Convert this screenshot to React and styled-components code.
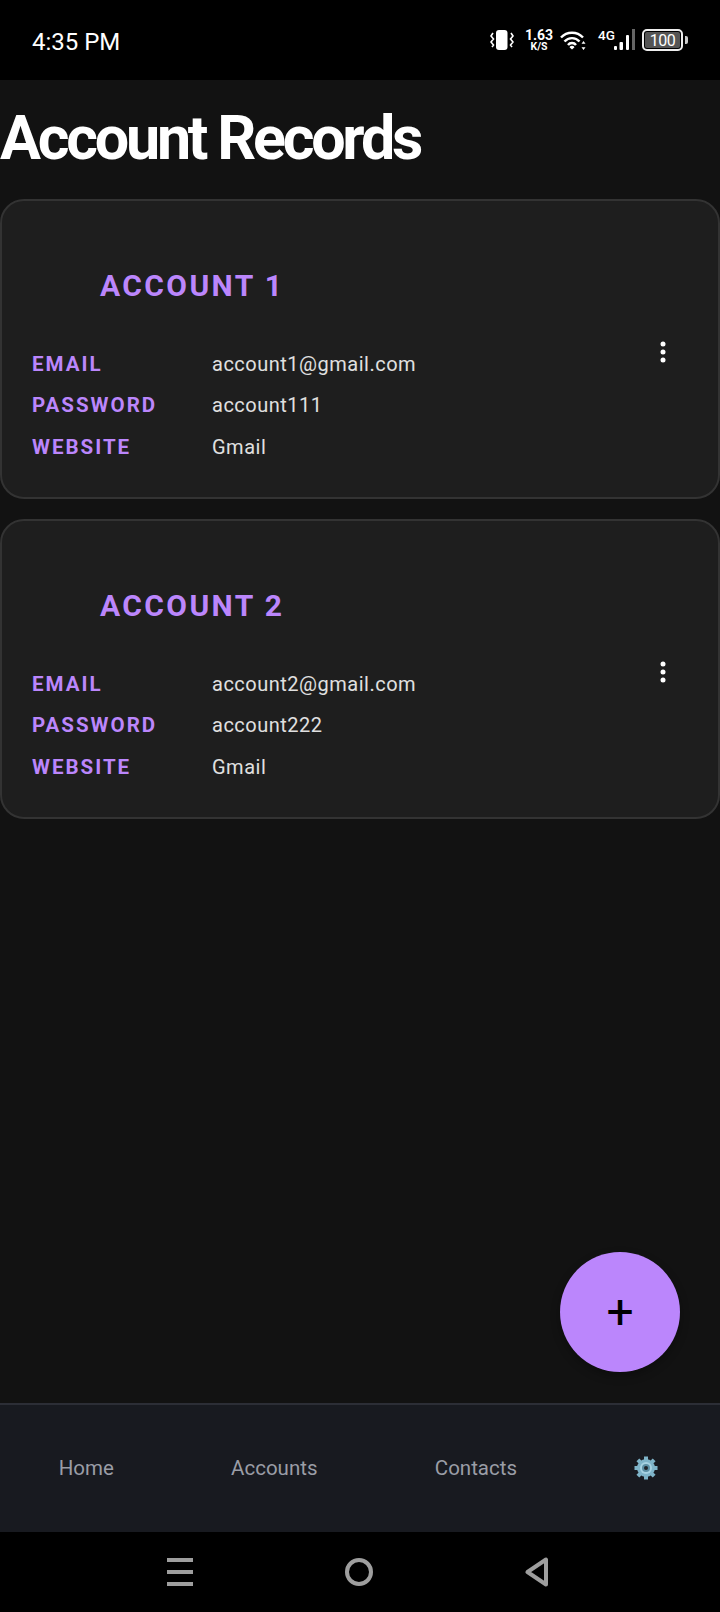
import React from "react";
import styled, { createGlobalStyle } from "styled-components";

const GlobalStyle = createGlobalStyle`
  html, body {
    margin: 0;
    padding: 0;
    background: #121212;
    font-family: Roboto, "Liberation Sans", sans-serif;
  }
`;

const Screen = styled.div`
  display: flex;
  flex-direction: column;
  width: 720px;
  height: 1612px;
  overflow: hidden;
  background: #121212;
`;

const StatusBar = styled.div`
  display: flex;
  flex: none;
  align-items: center;
  justify-content: space-between;
  height: 80px;
  padding: 0 32px;
  box-sizing: border-box;
  background: #000;
  color: #fff;
`;

const Clock = styled.span`
  margin-top: 3px;
  font-size: 24px;
`;

const StatusIcons = styled.div`
  display: flex;
  align-items: center;
`;

const Speed = styled.div`
  display: flex;
  flex-direction: column;
  align-items: center;
  width: 28px;
  margin: 0 7px 0 11px;
  font-weight: 700;
`;

const SpeedValue = styled.span`
  font-size: 14px;
  line-height: 13px;
`;

const SpeedUnit = styled.span`
  font-size: 10.5px;
  line-height: 10px;
`;

const Network = styled.span`
  width: 16px;
  margin: 0 0 10px 12px;
  font-size: 13.5px;
  font-weight: 500;
  line-height: 14px;
`;

const Battery = styled.div`
  position: relative;
  display: flex;
  align-items: center;
  justify-content: center;
  width: 41px;
  height: 22px;
  margin: 0 5px 0 7px;
  padding: 1px;
  border: 2px solid #eee;
  border-radius: 5px;
  box-sizing: border-box;
  background: #555;
  background-clip: content-box;
  font-size: 16px;
  letter-spacing: -0.5px;

  &::after {
    content: "";
    position: absolute;
    right: -7px;
    width: 3px;
    height: 8px;
    border-radius: 0 2px 2px 0;
    background: #ccc;
  }
`;

const Main = styled.main`
  position: relative;
  flex: 1;
`;

const Title = styled.h1`
  margin: 22px 0 25px;
  color: #fff;
  font-size: 61px;
  font-weight: 700;
  line-height: 72px;
  letter-spacing: -3.25px;
`;

const Card = styled.section`
  height: 300px;
  margin-bottom: 20px;
  border: 2px solid #333;
  border-radius: 24px;
  box-sizing: border-box;
  background: #1e1e1e;
`;

const CardName = styled.h2`
  margin: 0;
  padding: 67px 0 0 98px;
  color: #bb86fc;
  font-size: 30px;
  font-weight: 700;
  line-height: 36px;
  letter-spacing: 2.4px;
`;

const CardBody = styled.div`
  display: flex;
  justify-content: space-between;
  margin-top: 39px;
  padding: 0 43px 0 30px;
`;

const Row = styled.div`
  display: flex;
  align-items: center;
  height: 41.5px;
`;

const Label = styled.span`
  width: 180px;
  color: #bb86fc;
  font-size: 20.5px;
  font-weight: 700;
  letter-spacing: 2px;
`;

const Value = styled.span`
  color: #e0e0e0;
  font-size: 20px;
  letter-spacing: 0.5px;
`;

const MoreButton = styled.svg`
  flex: none;
  width: 24px;
  height: 24px;
  margin-top: -3px;
  fill: #fff;
`;

const Fab = styled.button`
  position: absolute;
  right: 40px;
  bottom: 31px;
  display: flex;
  align-items: center;
  justify-content: center;
  width: 120px;
  height: 120px;
  padding: 0;
  border: none;
  border-radius: 50%;
  background: #bb86fc;
  box-shadow: 0 4px 10px rgba(0, 0, 0, 0.3);
  color: #000;
  font-family: Roboto, sans-serif;
  font-size: 48px;
  line-height: 1;
`;

const TabBar = styled.nav`
  display: flex;
  flex: none;
  align-items: center;
  justify-content: space-around;
  height: 129px;
  padding: 0 3px 2px 0;
  border-top: 2px solid #2c2e36;
  box-sizing: border-box;
  background: #181a20;
`;

const Tab = styled.span`
  color: #9a9da6;
  font-size: 20.5px;
`;

const NavBar = styled.div`
  display: flex;
  flex: none;
  align-items: center;
  justify-content: center;
  gap: 152px;
  height: 80px;
  padding-right: 4px;
  background: #000;
`;

const VibrateIcon = () => (
  <svg width="24" height="20" viewBox="0 0 24 20">
    <rect x="6" y="0" width="11.500" height="20" rx="3" fill="#fff" />
    <path d="M3 3 1 6l2.500 3L1 12l2.500 3L2 17M21 3l2 3-2.500 3 2.500 3-2.500 3 1.500 2" fill="none" stroke="#fff" strokeWidth="1.600" />
  </svg>
);

const WifiIcon = () => (
  <svg width="26" height="20" viewBox="0 0 26 20">
    <path d="M1 7.500A15 15 0 0 1 23 7.500M4.500 11.500A10 10 0 0 1 19.500 11.500M8 15A5 5 0 0 1 16 15" fill="none" stroke="#fff" strokeWidth="2.400" />
    <path d="M9.500 17.200a3 3 0 0 1 5 0L12 19.500z" fill="#fff" />
    <path d="M23.500 11l2 2.700h-4zM23.500 20l-2-2.700h4z" fill="#fff" />
  </svg>
);

const SignalIcon = () => (
  <svg width="21" height="22" viewBox="0 0 21 22">
    <rect x="0" y="17" width="3" height="4" rx="1" fill="#fff" />
    <rect x="5.500" y="13" width="3.500" height="8" rx="1" fill="#fff" />
    <rect x="12" y="6" width="3" height="15" rx="1" fill="#fff" />
    <rect x="18" y="0" width="3" height="21" fill="#666" />
  </svg>
);

const MoreIcon = () => (
  <MoreButton viewBox="0 0 24 24">
    <circle cx="12" cy="4" r="2.500" />
    <circle cx="12" cy="12" r="2.500" />
    <circle cx="12" cy="20" r="2.500" />
  </MoreButton>
);

const GearIcon = () => (
  <svg width="24" height="24" viewBox="0 0 24 24">
    <g fill="#7fb4c9">
      {[0, 45, 90, 135, 180, 225, 270, 315].map((angle) => (
        <rect key={angle} x="10" y="0.500" width="4" height="5" transform={`rotate(${angle} 12 12)`} />
      ))}
      <circle cx="12" cy="12" r="9" />
    </g>
    <circle cx="12" cy="12" r="6" fill="#a6d2e2" />
    <circle cx="12" cy="12" r="4" fill="#5b8ea3" />
    <circle cx="12" cy="12" r="2" fill="#20252c" />
  </svg>
);

const MenuKey = () => (
  <svg width="26" height="28" viewBox="0 0 26 28" fill="#9e9e9e">
    <rect width="26" height="4" />
    <rect y="12" width="26" height="4" />
    <rect y="24" width="26" height="4" />
  </svg>
);

const HomeKey = () => (
  <svg width="28" height="28" viewBox="0 0 28 28">
    <circle cx="14" cy="14" r="12" fill="none" stroke="#9e9e9e" strokeWidth="4" />
  </svg>
);

const BackKey = () => (
  <svg width="24" height="30" viewBox="0 0 24 30">
    <path d="M21 2.500v25L2.500 15z" fill="none" stroke="#9e9e9e" strokeWidth="4" strokeLinejoin="round" />
  </svg>
);

const accounts = [
  { name: "ACCOUNT 1", email: "account1@gmail.com", password: "account111", website: "Gmail" },
  { name: "ACCOUNT 2", email: "account2@gmail.com", password: "account222", website: "Gmail" },
];

export default function App() {
  return (
    <Screen>
      <GlobalStyle />
      <StatusBar>
        <Clock>4:35 PM</Clock>
        <StatusIcons>
          <VibrateIcon />
          <Speed>
            <SpeedValue>1.63</SpeedValue>
            <SpeedUnit>K/S</SpeedUnit>
          </Speed>
          <WifiIcon />
          <Network>4G</Network>
          <SignalIcon />
          <Battery>100</Battery>
        </StatusIcons>
      </StatusBar>

      <Main>
        <Title>Account Records</Title>
        {accounts.map((account) => (
          <Card key={account.name}>
            <CardName>{account.name}</CardName>
            <CardBody>
              <div>
                <Row>
                  <Label>EMAIL</Label>
                  <Value>{account.email}</Value>
                </Row>
                <Row>
                  <Label>PASSWORD</Label>
                  <Value>{account.password}</Value>
                </Row>
                <Row>
                  <Label>WEBSITE</Label>
                  <Value>{account.website}</Value>
                </Row>
              </div>
              <MoreIcon />
            </CardBody>
          </Card>
        ))}
        <Fab>+</Fab>
      </Main>

      <TabBar>
        <Tab>Home</Tab>
        <Tab>Accounts</Tab>
        <Tab>Contacts</Tab>
        <GearIcon />
      </TabBar>

      <NavBar>
        <MenuKey />
        <HomeKey />
        <BackKey />
      </NavBar>
    </Screen>
  );
}
